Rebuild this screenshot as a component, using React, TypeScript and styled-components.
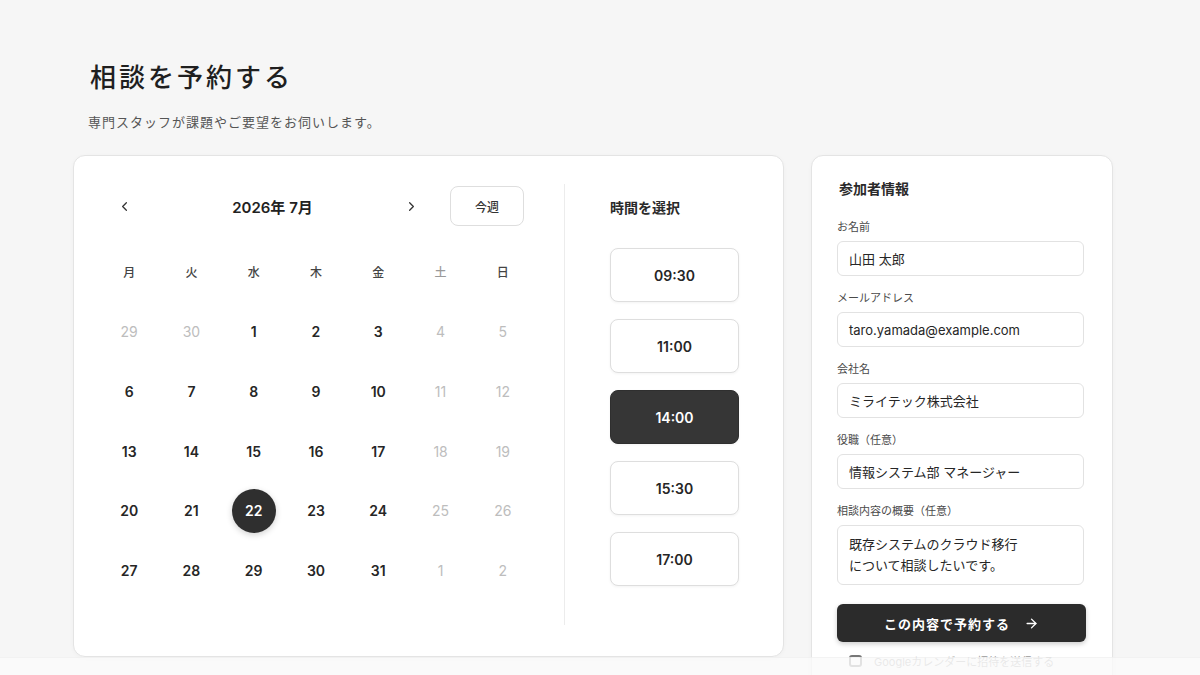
import React from "react";
import styled, { createGlobalStyle } from "styled-components";
import { ChevronLeft, ChevronRight, ArrowRight } from "lucide-react";

const GlobalStyle = createGlobalStyle`
  html, body {
    margin: 0;
    padding: 0;
    background: #f6f6f6;
    font-family: "Inter", "Noto Sans CJK JP", sans-serif;
    color: #222222;
  }
  * {
    box-sizing: border-box;
  }
`;

const Page = styled.main`
  width: 1200px;
  height: 675px;
  overflow: hidden;
  padding: 61px 0 0 73px;
  position: relative;
`;

const Header = styled.header`
  padding-left: 17px;
`;

const Title = styled.h1`
  margin: 0;
  font-size: 26px;
  line-height: 34px;
  font-weight: 500;
  letter-spacing: 3px;
  color: #1f1f1f;
`;

const Lead = styled.p`
  margin: 17px 0 0 -2px;
  font-size: 13px;
  line-height: 20px;
  letter-spacing: 1px;
  color: #555555;
`;

const Columns = styled.div`
  display: flex;
  align-items: flex-start;
  gap: 27px;
  margin-top: 23px;
`;

const Card = styled.section`
  background: #ffffff;
  border: 1px solid #e4e4e4;
  border-radius: 12px;
  box-shadow: 0 1px 4px rgba(0, 0, 0, 0.03);
`;

const BookingCard = styled(Card)`
  width: 711px;
  height: 502px;
  display: flex;
  padding: 28px 0 31px 24px;
`;

const Calendar = styled.div`
  width: 436px;
  padding-top: 2px;
`;

const MonthBar = styled.div`
  display: flex;
  align-items: center;
  padding: 0 10px 0 12px;
  height: 40px;
`;

const ArrowButton = styled.button`
  width: 28px;
  height: 28px;
  border: none;
  background: transparent;
  display: flex;
  align-items: center;
  justify-content: center;
  color: #333333;
  padding: 0;
`;

const MonthLabel = styled.div`
  flex: 1;
  text-align: center;
  font-size: 15px;
  font-weight: 600;
  padding-left: 10px;
  color: #222222;
`;

const TodayButton = styled.button`
  margin-left: 25px;
  width: 74px;
  height: 40px;
  border: 1px solid #dedede;
  border-radius: 8px;
  background: #ffffff;
  font: 500 12px "Inter", "Noto Sans CJK JP", sans-serif;
  color: #333333;
`;

const Grid = styled.div`
  display: grid;
  grid-template-columns: repeat(7, 1fr);
  grid-auto-rows: 59.75px;
  margin-top: 16px;
`;

const Weekday = styled.div<{ $muted?: boolean }>`
  display: flex;
  align-items: center;
  justify-content: center;
  font-size: 12px;
  font-weight: 500;
  color: ${(p) => (p.$muted ? "#9a9a9a" : "#444444")};
`;

const Day = styled.div<{ $muted?: boolean; $active?: boolean }>`
  display: flex;
  align-items: center;
  justify-content: center;
  span {
    width: 44px;
    height: 44px;
    border-radius: 50%;
    display: flex;
    align-items: center;
    justify-content: center;
    font-size: 14px;
    font-weight: ${(p) => (p.$muted ? 400 : 600)};
    color: ${(p) => (p.$active ? "#ffffff" : p.$muted ? "#bdbdbd" : "#262626")};
    background: ${(p) => (p.$active ? "#2f2f2f" : "transparent")};
    box-shadow: ${(p) => (p.$active ? "0 2px 6px rgba(0,0,0,0.18)" : "none")};
  }
`;

const Divider = styled.div`
  width: 1px;
  background: #ececec;
  margin-left: 30px;
`;

const TimeColumn = styled.div`
  padding: 14px 0 0 45px;
  width: 174px;
`;

const ColumnTitle = styled.h2`
  margin: 0 0 30px;
  font-size: 14px;
  line-height: 20px;
  font-weight: 600;
  color: #2a2a2a;
`;

const SlotList = styled.div`
  display: flex;
  flex-direction: column;
  gap: 17px;
`;

const Slot = styled.button<{ $active?: boolean }>`
  width: 129px;
  height: 54px;
  border-radius: 8px;
  border: 1px solid ${(p) => (p.$active ? "#2f2f2f" : "#dedede")};
  background: ${(p) => (p.$active ? "#363636" : "#ffffff")};
  color: ${(p) => (p.$active ? "#ffffff" : "#262626")};
  font: 600 14px "Inter", "Noto Sans CJK JP", sans-serif;
  box-shadow: 0 1px 3px rgba(0, 0, 0, 0.05);
`;

const FormCard = styled(Card)`
  width: 302px;
  height: 560px;
  padding: 23px 28px 0 25px;
`;

const FormTitle = styled.h2`
  margin: 0 0 20px 2px;
  font-size: 14px;
  line-height: 20px;
  font-weight: 600;
  color: #2a2a2a;
`;

const Field = styled.label`
  display: flex;
  flex-direction: column;
  gap: 6px;
  margin-bottom: 14px;
`;

const FieldLabel = styled.span`
  font-size: 11px;
  line-height: 16px;
  color: #4a4a4a;
`;

const Input = styled.div`
  height: 35px;
  border: 1px solid #e2e2e2;
  border-radius: 6px;
  padding: 0 11px;
  display: flex;
  align-items: center;
  font-size: 13px;
  color: #262626;
`;

const TextArea = styled.div`
  height: 60px;
  border: 1px solid #e2e2e2;
  border-radius: 6px;
  padding: 8px 11px;
  font-size: 13px;
  line-height: 21px;
  color: #262626;
`;

/* margin collapses with the field above it */
const Submit = styled.button`
  margin-top: 19px;
  width: 249px;
  height: 38px;
  border: none;
  border-radius: 6px;
  background: #2b2b2b;
  color: #ffffff;
  font: 600 13px "Inter", "Noto Sans CJK JP", sans-serif;
  letter-spacing: 1px;
  display: flex;
  align-items: center;
  justify-content: center;
  gap: 14px;
  box-shadow: 0 2px 5px rgba(0, 0, 0, 0.2);
`;

const CheckRow = styled.div`
  display: flex;
  align-items: center;
  gap: 12px;
  margin-top: 11px;
  padding-left: 12px;
  font-size: 11px;
  color: #9a9a9a;
`;

const CheckBox = styled.span`
  width: 13px;
  height: 12px;
  border: 2px solid #777777;
  border-radius: 3px;
`;

const BottomBar = styled.div`
  position: absolute;
  left: 0;
  right: 0;
  bottom: 0;
  height: 18px;
  background: rgba(250, 250, 250, 0.82);
  border-top: 1px solid rgba(0, 0, 0, 0.03);
`;

const weekdays = ["月", "火", "水", "木", "金", "土", "日"];

type Cell = { d: number; muted?: boolean; active?: boolean };

const weeks: Cell[][] = [
  [{ d: 29, muted: true }, { d: 30, muted: true }, { d: 1 }, { d: 2 }, { d: 3 }, { d: 4, muted: true }, { d: 5, muted: true }],
  [{ d: 6 }, { d: 7 }, { d: 8 }, { d: 9 }, { d: 10 }, { d: 11, muted: true }, { d: 12, muted: true }],
  [{ d: 13 }, { d: 14 }, { d: 15 }, { d: 16 }, { d: 17 }, { d: 18, muted: true }, { d: 19, muted: true }],
  [{ d: 20 }, { d: 21 }, { d: 22, active: true }, { d: 23 }, { d: 24 }, { d: 25, muted: true }, { d: 26, muted: true }],
  [{ d: 27 }, { d: 28 }, { d: 29 }, { d: 30 }, { d: 31 }, { d: 1, muted: true }, { d: 2, muted: true }],
];

const slots = ["09:30", "11:00", "14:00", "15:30", "17:00"];

const fields = [
  { label: "お名前", value: "山田 太郎" },
  { label: "メールアドレス", value: "taro.yamada@example.com" },
  { label: "会社名", value: "ミライテック株式会社" },
  { label: "役職（任意）", value: "情報システム部 マネージャー" },
];

const App = (): JSX.Element => {
  return (
    <Page>
      <GlobalStyle />
      <Header>
        <Title>相談を予約する</Title>
        <Lead>専門スタッフが課題やご要望をお伺いします。</Lead>
      </Header>
      <Columns>
        <BookingCard>
          <Calendar>
            <MonthBar>
              <ArrowButton aria-label="前の月">
                <ChevronLeft size={15} strokeWidth={2} />
              </ArrowButton>
              <MonthLabel>2026年 7月</MonthLabel>
              <ArrowButton aria-label="次の月">
                <ChevronRight size={15} strokeWidth={2} />
              </ArrowButton>
              <TodayButton>今週</TodayButton>
            </MonthBar>
            <Grid>
              {weekdays.map((w) => (
                <Weekday key={w} $muted={w === "土"}>
                  {w}
                </Weekday>
              ))}
              {weeks.flat().map((c, i) => (
                <Day key={i} $muted={c.muted} $active={c.active}>
                  <span>{c.d}</span>
                </Day>
              ))}
            </Grid>
          </Calendar>
          <Divider />
          <TimeColumn>
            <ColumnTitle>時間を選択</ColumnTitle>
            <SlotList>
              {slots.map((s) => (
                <Slot key={s} $active={s === "14:00"}>
                  {s}
                </Slot>
              ))}
            </SlotList>
          </TimeColumn>
        </BookingCard>

        <FormCard>
          <FormTitle>参加者情報</FormTitle>
          {fields.map((f) => (
            <Field key={f.label}>
              <FieldLabel>{f.label}</FieldLabel>
              <Input>{f.value}</Input>
            </Field>
          ))}
          <Field>
            <FieldLabel>相談内容の概要（任意）</FieldLabel>
            <TextArea>
              既存システムのクラウド移行
              <br />
              について相談したいです。
            </TextArea>
          </Field>
          <Submit>
            この内容で予約する
            <ArrowRight size={15} strokeWidth={2.2} />
          </Submit>
          <CheckRow>
            <CheckBox />
            Googleカレンダーに招待を送信する
          </CheckRow>
        </FormCard>
      </Columns>
      <BottomBar />
    </Page>
  );
};

export default App;
